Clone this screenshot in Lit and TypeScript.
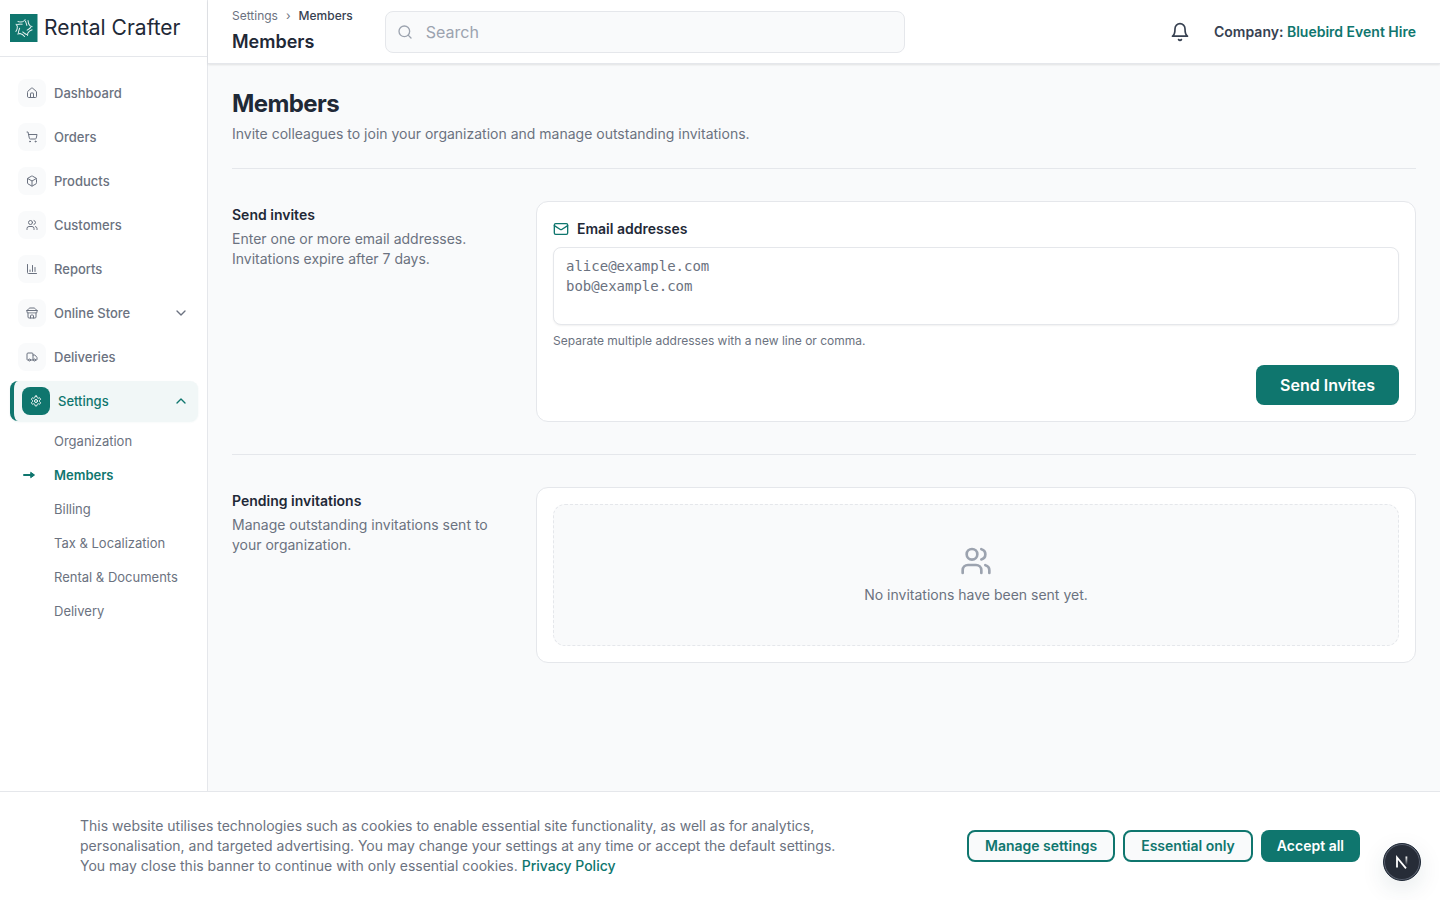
import { LitElement, html, css, svg, nothing } from "lit";
import { customElement, state } from "lit/decorators.js";

const icons = {
  home: svg`<path d="M15 21v-8a1 1 0 0 0-1-1h-4a1 1 0 0 0-1 1v8"/><path d="M3 10a2 2 0 0 1 .709-1.528l7-5.999a2 2 0 0 1 2.582 0l7 5.999A2 2 0 0 1 21 10v9a2 2 0 0 1-2 2H5a2 2 0 0 1-2-2z"/>`,
  cart: svg`<circle cx="8" cy="21" r="1"/><circle cx="19" cy="21" r="1"/><path d="M2.05 2.05h2l2.66 12.42a2 2 0 0 0 2 1.58h9.78a2 2 0 0 0 1.95-1.57l1.65-7.43H5.12"/>`,
  box: svg`<path d="M21 8a2 2 0 0 0-1-1.73l-7-4a2 2 0 0 0-2 0l-7 4A2 2 0 0 0 3 8v8a2 2 0 0 0 1 1.73l7 4a2 2 0 0 0 2 0l7-4A2 2 0 0 0 21 16Z"/><path d="m3.3 7 8.7 5 8.7-5"/><path d="M12 22V12"/>`,
  users: svg`<path d="M16 21v-2a4 4 0 0 0-4-4H6a4 4 0 0 0-4 4v2"/><circle cx="9" cy="7" r="4"/><path d="M22 21v-2a4 4 0 0 0-3-3.87"/><path d="M16 3.13a4 4 0 0 1 0 7.75"/>`,
  chart: svg`<path d="M3 3v16a2 2 0 0 0 2 2h16"/><path d="M18 17V9"/><path d="M13 17V5"/><path d="M8 17v-3"/>`,
  store: svg`<path d="m2 7 4.41-4.41A2 2 0 0 1 7.83 2h8.34a2 2 0 0 1 1.42.59L22 7"/><path d="M4 12v8a2 2 0 0 0 2 2h12a2 2 0 0 0 2-2v-8"/><path d="M15 22v-4a2 2 0 0 0-2-2h-2a2 2 0 0 0-2 2v4"/><path d="M2 7h20"/><path d="M22 7v3a2 2 0 0 1-2 2a2.7 2.7 0 0 1-1.59-.63.7.7 0 0 0-.82 0A2.7 2.7 0 0 1 16 12a2.7 2.7 0 0 1-1.59-.63.7.7 0 0 0-.82 0A2.7 2.7 0 0 1 12 12a2.7 2.7 0 0 1-1.59-.63.7.7 0 0 0-.82 0A2.7 2.7 0 0 1 8 12a2.7 2.7 0 0 1-1.59-.63.7.7 0 0 0-.82 0A2.7 2.7 0 0 1 4 12a2 2 0 0 1-2-2V7"/>`,
  truck: svg`<path d="M14 18V6a2 2 0 0 0-2-2H4a2 2 0 0 0-2 2v11a1 1 0 0 0 1 1h2"/><path d="M15 18H9"/><path d="M19 18h2a1 1 0 0 0 1-1v-3.65a1 1 0 0 0-.22-.624l-3.48-4.35A1 1 0 0 0 17.52 8H14"/><circle cx="17" cy="18" r="2"/><circle cx="7" cy="18" r="2"/>`,
  gear: svg`<path d="M12.22 2h-.44a2 2 0 0 0-2 2v.18a2 2 0 0 1-1 1.73l-.43.25a2 2 0 0 1-2 0l-.15-.08a2 2 0 0 0-2.73.73l-.22.38a2 2 0 0 0 .73 2.73l.15.1a2 2 0 0 1 1 1.72v.51a2 2 0 0 1-1 1.74l-.15.09a2 2 0 0 0-.73 2.73l.22.38a2 2 0 0 0 2.73.73l.15-.08a2 2 0 0 1 2 0l.43.25a2 2 0 0 1 1 1.73V20a2 2 0 0 0 2 2h.44a2 2 0 0 0 2-2v-.18a2 2 0 0 1 1-1.73l.43-.25a2 2 0 0 1 2 0l.15.08a2 2 0 0 0 2.73-.73l.22-.39a2 2 0 0 0-.73-2.73l-.15-.08a2 2 0 0 1-1-1.74v-.5a2 2 0 0 1 1-1.74l.15-.09a2 2 0 0 0 .73-2.73l-.22-.38a2 2 0 0 0-2.73-.73l-.15.08a2 2 0 0 1-2 0l-.43-.25a2 2 0 0 1-1-1.73V4a2 2 0 0 0-2-2z"/><circle cx="12" cy="12" r="3"/>`,
  down: svg`<path d="m6 9 6 6 6-6"/>`,
  up: svg`<path d="m18 15-6-6-6 6"/>`,
  search: svg`<circle cx="11" cy="11" r="8"/><path d="m21 21-4.3-4.3"/>`,
  bell: svg`<path d="M6 8a6 6 0 0 1 12 0c0 7 3 9 3 9H3s3-2 3-9"/><path d="M10.3 21a1.94 1.94 0 0 0 3.4 0"/>`,
  mail: svg`<rect width="20" height="16" x="2" y="4" rx="2"/><path d="m22 7-8.97 5.7a1.94 1.94 0 0 1-2.06 0L2 7"/>`,
};

type IconName = keyof typeof icons;

const icon = (name: IconName, size: number) => html`<svg
  class="icon" width=${size} height=${size} viewBox="0 0 24 24" fill="none"
  stroke="currentColor" stroke-width="2" stroke-linecap="round"
  stroke-linejoin="round" aria-hidden="true">${icons[name]}</svg>`;

const base = css`
  *, *::before, *::after { box-sizing: border-box; }
  h1, h2, p, ul { margin: 0; padding: 0; }
  ul { list-style: none; }
  a { color: inherit; text-decoration: none; }
  button, input, textarea { font: inherit; color: inherit; margin: 0; }
  button { cursor: pointer; }
  .icon { display: block; flex: none; }
`;

@customElement("side-nav")
class SideNav extends LitElement {
  static styles = [base, css`
    :host {
      display: block;
      background: #fff;
      border-right: 1px solid #e5e7eb;
      color: #6b7280;
      font-size: 13px;
      font-weight: 500;
      line-height: 20px;
    }
    .brand {
      display: flex;
      align-items: center;
      gap: 6px;
      height: 57px;
      padding: 0 10px;
      border-bottom: 1px solid #e5e7eb;
      color: #1f2937;
      font-size: 21px;
      font-weight: 400;
      line-height: 28px;
      white-space: nowrap;
    }
    .menu { display: flex; flex-direction: column; gap: 4px; padding: 16px 9px 16px 10px; }
    .item {
      display: flex;
      align-items: center;
      gap: 8px;
      width: 100%;
      padding: 6px 9px 6px 8px;
      border: 0;
      border-radius: 8px;
      background: none;
      text-align: left;
    }
    .item .tile {
      display: grid;
      place-items: center;
      width: 28px;
      height: 28px;
      border-radius: 8px;
      background: #f9fafb;
    }
    .label { flex: 1; }
    .item.active {
      border-left: 4px solid #0f766e;
      background: #f1f7f7;
      box-shadow: 0 1px 2px rgb(15 118 110 / 0.08);
      color: #0f766e;
    }
    .item.active .tile { background: #0f766e; color: #fff; }
    .sub { display: flex; flex-direction: column; gap: 2px; padding-top: 4px; font-weight: 400; }
    .link { display: flex; align-items: center; gap: 18px; padding: 6px 12px; }
    .mark { width: 14px; }
    .link.current { color: #0f766e; font-weight: 600; }
  `];

  @state() private open = true;

  private items: [IconName, string][] = [
    ["home", "Dashboard"], ["cart", "Orders"], ["box", "Products"],
    ["users", "Customers"], ["chart", "Reports"], ["store", "Online Store"],
    ["truck", "Deliveries"],
  ];
  private pages = ["Organization", "Members", "Billing", "Tax & Localization", "Rental & Documents", "Delivery"];

  render() {
    return html`
      <a class="brand" href="#">
        <svg class="icon" width="28" height="28" viewBox="0 0 28 28" fill="none" stroke="#fff"
          stroke-opacity="0.9" stroke-linecap="round" stroke-linejoin="round" aria-hidden="true">
          <path fill="#0f766e" stroke="none" d="M0 0h27.5v28H0z"/>
          ${[0, 72, 144, 216, 288].map((turn) => svg`<g transform="rotate(${turn} 13.7 14)">
            <path d="M8 7.600c2 .6 4 .5 5.500-.2L15 5.600"/><path d="M7.600 10.400c1.800-.4 3.200-.2 4.600-.2"/>
          </g>`)}
        </svg>
        <span>Rental Crafter</span>
      </a>
      <nav class="menu" aria-label="Main">
        ${this.items.map(([name, label]) => name === "store"
          ? html`<button class="item" type="button" aria-expanded="false">
              <span class="tile">${icon(name, 12)}</span><span class="label">${label}</span>
              ${icon("down", 16)}</button>`
          : html`<a class="item" href="#"><span class="tile">${icon(name, 12)}</span><span class="label">${label}</span></a>`)}
        <div>
          <button class="item active" type="button" aria-expanded=${this.open} @click=${() => (this.open = !this.open)}>
            <span class="tile">${icon("gear", 12)}</span><span class="label">Settings</span>
            ${icon(this.open ? "up" : "down", 16)}
          </button>
          ${this.open ? html`<ul class="sub">
            ${this.pages.map((page) => html`<li><a class="link ${page === "Members" ? "current" : ""}" href="#">
              <span class="mark">${page === "Members"
                ? html`<svg class="icon" width="14" height="10" viewBox="0 0 14 10" fill="none" stroke="currentColor"
                    stroke-width="2" stroke-linecap="round" stroke-linejoin="round" aria-hidden="true">
                    <path d="M2 5h9"/><path fill="currentColor" stroke-width="1" d="M9 2.500 12.500 5 9 7.500z"/></svg>`
                : nothing}</span>
              <span>${page}</span></a></li>`)}
          </ul>` : nothing}
        </div>
      </nav>`;
  }
}

@customElement("top-bar")
class TopBar extends LitElement {
  static styles = [base, css`
    :host {
      display: flex;
      align-items: center;
      gap: 32px;
      height: 64px;
      padding: 0 24px;
      border-bottom: 1px solid #e5e7eb;
      background: #fff;
      box-shadow: 0 1px 2px rgb(0 0 0 / 0.1);
    }
    .crumbs { display: flex; gap: 8px; font-size: 12px; line-height: 16px; color: #6b7280; }
    .here { color: #374151; font-weight: 500; }
    .title { margin-top: 4px; color: #1f2937; font-size: 18px; font-weight: 600; line-height: 28px; }
    .search {
      display: flex;
      align-items: center;
      gap: 13px;
      flex: 0 1 520px;
      height: 42px;
      padding: 0 11px;
      border: 1px solid #e5e7eb;
      border-radius: 8px;
      background: #f9fafb;
      color: #9ca3af;
    }
    .field { flex: 1; min-width: 0; padding: 0; border: 0; outline: 0; background: none; font-size: 16px; line-height: 24px; }
    .field::placeholder { color: #9ca3af; opacity: 1; }
    .right { display: flex; align-items: center; gap: 24px; margin-left: auto; color: #374151; font-size: 14px; font-weight: 600; line-height: 20px; }
    .bell { padding: 0; border: 0; background: none; }
    .company { color: #0f766e; }
  `];

  render() {
    return html`
      <div>
        <nav class="crumbs" aria-label="Breadcrumb">
          <a href="#">Settings</a><span>›</span><span class="here">Members</span>
        </nav>
        <p class="title">Members</p>
      </div>
      <label class="search">${icon("search", 16)}
        <input class="field" type="search" placeholder="Search" aria-label="Search" />
      </label>
      <div class="right">
        <button class="bell" type="button" aria-label="Notifications">${icon("bell", 20)}</button>
        <span>Company: <a class="company" href="#">Bluebird Event Hire</a></span>
      </div>`;
  }
}

@customElement("cookie-banner")
class CookieBanner extends LitElement {
  static styles = [base, css`
    :host {
      display: flex;
      align-items: center;
      justify-content: space-between;
      gap: 32px;
      padding: 24px 80px;
      border-top: 1px solid #e5e7eb;
      background: #fff;
      color: #6b7280;
      font-size: 14px;
      line-height: 20px;
    }
    .copy { max-width: 768px; }
    .policy { color: #0f766e; font-weight: 500; }
    .actions { display: flex; gap: 8px; }
    .btn {
      height: 32px;
      padding: 0 16px;
      border: 2px solid #0f766e;
      border-radius: 8px;
      background: #f9fafb;
      color: #0f766e;
      font-weight: 600;
      white-space: nowrap;
    }
    .btn.solid { border: 0; background: #0f766e; color: #fff; }
  `];

  render() {
    return html`
      <p class="copy">This website utilises technologies such as cookies to enable essential site functionality, as well as for analytics, personalisation, and targeted advertising. You may change your settings at any time or accept the default settings. You may close this banner to continue with only essential cookies. <a class="policy" href="#">Privacy Policy</a></p>
      <div class="actions">
        <button class="btn" type="button">Manage settings</button>
        <button class="btn" type="button">Essential only</button>
        <button class="btn solid" type="button">Accept all</button>
      </div>`;
  }
}

@customElement("app-root")
class AppRoot extends LitElement {
  static styles = [base, css`
    :host {
      display: grid;
      grid-template-columns: 208px minmax(0, 1fr);
      min-height: 100vh;
      background: #f9fafb;
      color: #6b7280;
      font-family: Inter, "Liberation Sans", sans-serif;
      font-size: 14px;
      line-height: 20px;
    }
    .content { padding: 24px; }
    .heading { color: #1f2937; font-size: 24px; font-weight: 700; line-height: 32px; letter-spacing: -0.025em; }
    .intro { margin-top: 4px; }
    .section {
      display: grid;
      grid-template-columns: 256px minmax(0, 1fr);
      gap: 48px;
      padding: 32px 0;
      border-top: 1px solid #e5e7eb;
    }
    .head { padding-bottom: 24px; }
    .about { padding-top: 4px; }
    .name { margin-bottom: 4px; color: #1f2937; font-size: 14px; font-weight: 600; line-height: 20px; }
    .card { padding: 16px; border: 1px solid #e5e7eb; border-radius: 12px; background: #fff; }
    .caption { display: flex; align-items: center; gap: 8px; margin-bottom: 8px; color: #1f2937; font-weight: 600; line-height: 21px; }
    .caption .icon { color: #0f766e; }
    .emails {
      display: block;
      width: 100%;
      height: 78px;
      padding: 8px 12px;
      border: 1px solid #e5e7eb;
      border-radius: 8px;
      background: #fff;
      box-shadow: 0 1px 2px rgb(0 0 0 / 0.06);
      font-family: "DejaVu Sans Mono", monospace;
      font-size: 14px;
      line-height: 20px;
      resize: none;
    }
    .emails::placeholder { color: #6b7280; opacity: 1; }
    .hint { margin-top: 8px; font-size: 12px; line-height: 16px; }
    .row { display: flex; justify-content: flex-end; margin-top: 16px; }
    .send { height: 40px; padding: 0 24px; border: 0; border-radius: 8px; background: #0f766e; color: #fff; font-size: 16px; font-weight: 600; }
    .empty {
      display: flex;
      flex-direction: column;
      align-items: center;
      gap: 8px;
      padding: 40px 16px;
      border: 1px dashed #e5e7eb;
      border-radius: 12px;
      background: #f9fafb;
    }
    .empty .icon { color: #9ca3af; }
    .banner { position: fixed; inset: auto 0 0 0; }
    .badge {
      position: fixed;
      right: 19px;
      bottom: 19px;
      display: grid;
      place-items: center;
      width: 38px;
      height: 38px;
      padding: 0;
      border: 1px solid #1f2937;
      border-radius: 50%;
      background: #262c37;
      box-shadow: inset 0 0 0 1px #5b6270, 0 8px 24px rgb(15 60 70 / 0.1);
      color: #fff;
    }
  `];

  render() {
    return html`
      <side-nav></side-nav>
      <div>
        <top-bar></top-bar>
        <main class="content">
          <header class="head">
            <h1 class="heading">Members</h1>
            <p class="intro">Invite colleagues to join your organization and manage outstanding invitations.</p>
          </header>
          <section class="section">
            <div class="about">
              <h2 class="name">Send invites</h2>
              <p>Enter one or more email addresses. Invitations expire after 7 days.</p>
            </div>
            <form class="card" @submit=${(e: Event) => e.preventDefault()}>
              <label class="caption" for="emails">${icon("mail", 16)}Email addresses</label>
              <textarea class="emails" id="emails" placeholder=${"alice@example.com\nbob@example.com"}></textarea>
              <p class="hint">Separate multiple addresses with a new line or comma.</p>
              <div class="row"><button class="send" type="submit">Send Invites</button></div>
            </form>
          </section>
          <section class="section">
            <div class="about">
              <h2 class="name">Pending invitations</h2>
              <p>Manage outstanding invitations sent to your organization.</p>
            </div>
            <div class="card">
              <div class="empty">${icon("users", 32)}<p>No invitations have been sent yet.</p></div>
            </div>
          </section>
        </main>
      </div>
      <cookie-banner class="banner"></cookie-banner>
      <button class="badge" type="button" aria-label="Developer tools">
        <svg class="icon" width="14" height="14" viewBox="0 0 14 14" fill="none" stroke="currentColor" stroke-width="1.8" aria-hidden="true">
          <defs><linearGradient id="fade" x1="0" y1="0" x2="0" y2="1"><stop offset="0" stop-color="#fff"/><stop offset="1" stop-color="#fff" stop-opacity="0"/></linearGradient></defs>
          <path d="M2 12.500V2.500l9 10.800"/><path fill="url(#fade)" stroke="none" d="M10.500 1.500h1.800v8.500h-1.800z"/>
        </svg>
      </button>`;
  }
}
